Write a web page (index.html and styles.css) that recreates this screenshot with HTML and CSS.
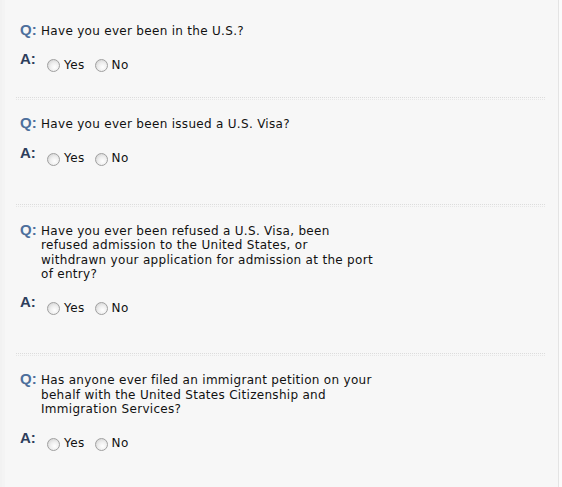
FILE: index.html
```html
<!DOCTYPE html>
<html>
<head>
<meta charset="utf-8">
<link rel="stylesheet" href="styles.css">
</head>
<body>
<div class="page">
  <div class="panel">
    <div class="qa qa-first">
      <div class="q"><span class="q-label">Q:</span><span class="q-text">Have you ever been in the U.S.?</span></div>
      <div class="a"><span class="a-label">A:</span>
        <div class="opts">
          <label class="opt"><input type="radio" name="q1">Yes</label>
          <label class="opt"><input type="radio" name="q1">No</label>
        </div>
      </div>
    </div>
    <div class="sep"></div>
    <div class="qa">
      <div class="q"><span class="q-label">Q:</span><span class="q-text">Have you ever been issued a U.S. Visa?</span></div>
      <div class="a"><span class="a-label">A:</span>
        <div class="opts">
          <label class="opt"><input type="radio" name="q2">Yes</label>
          <label class="opt"><input type="radio" name="q2">No</label>
        </div>
      </div>
    </div>
    <div class="sep"></div>
    <div class="qa">
      <div class="q"><span class="q-label">Q:</span><span class="q-text">Have you ever been refused a U.S. Visa, been refused admission to the United States, or withdrawn your application for admission at the port of entry?</span></div>
      <div class="a"><span class="a-label">A:</span>
        <div class="opts">
          <label class="opt"><input type="radio" name="q3">Yes</label>
          <label class="opt"><input type="radio" name="q3">No</label>
        </div>
      </div>
    </div>
    <div class="sep"></div>
    <div class="qa qa-last">
      <div class="q"><span class="q-label">Q:</span><span class="q-text">Has anyone ever filed an immigrant petition on your behalf with the United States Citizenship and Immigration Services?</span></div>
      <div class="a"><span class="a-label">A:</span>
        <div class="opts">
          <label class="opt"><input type="radio" name="q4">Yes</label>
          <label class="opt"><input type="radio" name="q4">No</label>
        </div>
      </div>
    </div>
  </div>
  <div class="footer-strip"></div>
</div>
</body>
</html>
```
FILE: styles.css
```css
html, body {
  margin: 0;
  padding: 0;
  background: #fbfbfb;
}
.page {
  width: 558px;
  height: 487px;
  display: flex;
  flex-direction: column;
  background: #f7f7f7;
  border-right: 1px solid #e4e4e4;
  box-shadow: inset 2px 0 0 #f2f2f2, inset 5px 0 0 #f4f4f4;
}
.panel {
  flex: 1;
  padding: 22px 0 0 16px;
}
.qa {
  padding-left: 4px;
  padding-bottom: 38px;
}
.qa-first {
  padding-bottom: 25px;
}
.q {
  display: flex;
  align-items: baseline;
}
.q-label {
  font-family: "Liberation Sans", Arial, sans-serif;
  font-weight: bold;
  font-size: 15px;
  line-height: 15px;
  color: #4d6f9c;
  width: 21px;
  flex: none;
}
.q-text {
  font-family: "DejaVu Sans", Verdana, sans-serif;
  font-size: 12px;
  letter-spacing: 0.3px;
  line-height: 14.4px;
  color: #111;
  width: 336px;
}
.a {
  display: flex;
  align-items: flex-start;
  margin-top: 13px;
}
.a-label {
  font-family: "Liberation Sans", Arial, sans-serif;
  font-weight: bold;
  font-size: 15px;
  line-height: 15px;
  color: #2e3e5c;
  width: 27px;
  flex: none;
}
.opts {
  display: flex;
  gap: 10px;
  margin-top: 7px;
}
.opt {
  display: flex;
  align-items: center;
  font-family: "DejaVu Sans", Verdana, sans-serif;
  font-size: 12px;
  letter-spacing: 0.4px;
  line-height: 13px;
  color: #111;
}
.opt input {
  appearance: none;
  -webkit-appearance: none;
  width: 13px;
  height: 13px;
  margin: 1px 4px 0 0;
  border: 1px solid #a0a0a0;
  border-radius: 50%;
  background: radial-gradient(circle at 60% 65%, #ffffff 0%, #eeeeee 45%, #cacaca 100%);
  box-sizing: border-box;
}
.sep {
  width: 529px;
  height: 1px;
  border-top: 1px dotted #dcdcdc;
  border-bottom: 1px dotted #e6e6e6;
  margin-bottom: 15px;
}
.footer-strip {
  height: 9px;
  background-color: #f1f1f1;
  background-image:
    linear-gradient(45deg, #f7f7f7 25%, transparent 25%, transparent 75%, #f7f7f7 75%),
    linear-gradient(45deg, #f7f7f7 25%, transparent 25%, transparent 75%, #f7f7f7 75%);
  background-size: 4px 4px;
  background-position: 0 0, 2px 2px;
}
```
